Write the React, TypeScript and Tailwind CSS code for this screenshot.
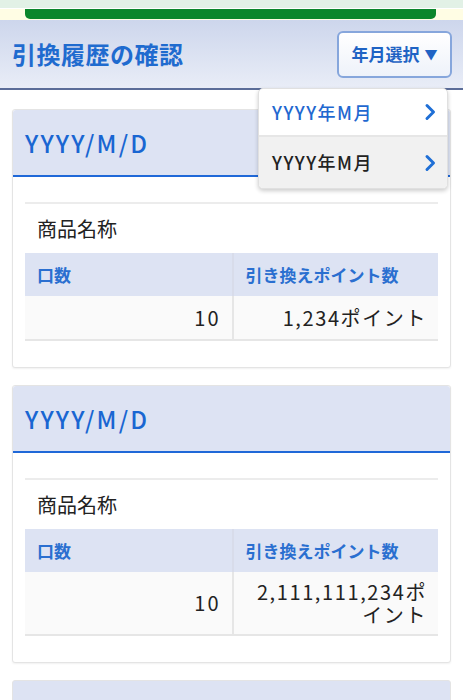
import React from "react";

const FONT = { fontFamily: '"Noto Sans CJK JP", "Noto Sans", sans-serif' };

function Chevron() {
  return (
    <svg width="12" height="20" viewBox="0 0 12 20" fill="none">
      <path d="M3 3.5 L9.5 10 L3 16.5" stroke="#1f6fd6" strokeWidth="3" strokeLinecap="round" strokeLinejoin="round" />
    </svg>
  );
}

type Rec = { qty: string; pts: string; tall?: boolean };

function Card({ rec }: { rec: Rec }) {
  const rowH = rec.tall ? "h-[64px]" : "h-[45px]";
  return (
    <div className="rounded-[3px] border border-[#e4e4e4] bg-white shadow-[0_1px_2px_rgba(0,0,0,0.06)]">
      <div className="flex h-[67px] items-center rounded-t-[3px] border-b-2 border-[#1f68d8] bg-[#dde3f3] pl-[12px]">
        <span className="text-[24px] font-medium tracking-[0.09em] text-[#1966d2]">YYYY/M/D</span>
      </div>
      <div className="px-[12px] pt-[25px] pb-[26px]">
        <div className="h-[2px] bg-[#ececec]" />
        <div className="flex h-[49px] items-center pl-[12px] text-[20px] text-[#222]">商品名称</div>
        <div className="grid grid-cols-2">
          <div className="flex h-[43px] items-center bg-[#dde3f3] pl-[12px] text-[17px] font-semibold text-[#2a6fd0]">口数</div>
          <div className="flex h-[43px] items-center border-l-2 border-[#d8dcea] bg-[#dde3f3] pl-[12px] text-[17px] font-semibold text-[#2a6fd0]">引き換えポイント数</div>
          <div className={`flex ${rowH} items-center justify-end border-b-2 border-[#e6e6e6] bg-[#fafafa] pr-[11px] text-[20px] text-[#222]`}>
            <span className="tracking-[0.1em]">{rec.qty}</span>
          </div>
          <div className={`flex ${rowH} items-center justify-end border-b-2 border-l-2 border-[#e6e6e6] bg-[#fafafa] pl-[12px] pr-[11px] text-right text-[20px] leading-[23px] text-[#222]`}>
            <span className="break-all tracking-[0.08em]">{rec.pts}</span>
          </div>
        </div>
      </div>
    </div>
  );
}

export default function App() {
  return (
    <div className="relative h-[700px] w-[463px] overflow-hidden bg-white" style={FONT}>
      <div className="h-[9px] border-b border-white bg-[#e2f1e6]" />
      <div className="h-[11px] bg-[#fffde4] pl-[25px] pr-[27px]">
        <div className="h-[10px] rounded-b-[5px] bg-[#0b862b]" />
      </div>
      <div className="flex h-[70px] items-center justify-between border-b-2 border-[#5b6d98] bg-gradient-to-b from-[#cdd6ec] to-[#e9edf7] pl-[12px] pr-[11px]">
        <h1 className="text-[24px] font-semibold tracking-[0.02em] text-[#1f6bcf]">引換履歴の確認</h1>
        <button className="flex h-[47px] w-[115px] items-center justify-center gap-[5px] rounded-[6px] border-2 border-[#86a6dc] bg-gradient-to-b from-white to-[#eef2fa] text-[17px] font-semibold text-[#1f63c4]">
          <span>年月選択</span>
          <span className="text-[13px]">▼</span>
        </button>
      </div>

      <div className="flex flex-col gap-[17px] px-[12px] pt-[19px] pr-[12px]">
        <Card rec={{ qty: "10", pts: "1,234ポイント" }} />
        <Card rec={{ qty: "10", pts: "2,111,111,234ポイント", tall: true }} />
        <div className="h-[60px] rounded-[3px] border border-[#e4e4e4] bg-[#dde3f3]" />
      </div>

      <div className="absolute left-[258px] top-[88px] w-[190px] overflow-hidden rounded-[5px] border border-[#e0e0e0] bg-white shadow-[0_2px_4px_rgba(0,0,0,0.2)]">
        <div className="flex h-[48px] items-center justify-between border-b-2 border-[#e6e6e6] pl-[13px] pr-[11px]">
          <span className="text-[18px] font-medium tracking-[0.08em] text-[#1f68d0]">YYYY年M月</span>
          <Chevron />
        </div>
        <div className="flex h-[51px] items-center justify-between bg-[#f1f1f1] pl-[13px] pr-[11px]">
          <span className="text-[18px] font-medium tracking-[0.08em] text-[#222]">YYYY年M月</span>
          <Chevron />
        </div>
      </div>
    </div>
  );
}
